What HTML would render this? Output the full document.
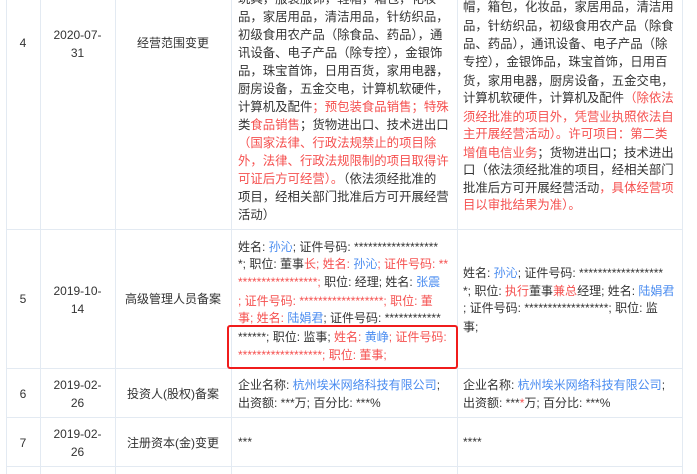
<!DOCTYPE html>
<html><head><meta charset="utf-8"><style>
body{margin:0;width:697px;height:474px;overflow:hidden;background:#fff;font-family:"Liberation Sans","Noto Sans CJK SC",sans-serif;font-size:12px;color:#333}
.l{position:absolute;white-space:nowrap;line-height:18px;height:18px}
.r{color:#f5504f}.b{color:#4a8cf0}
.v{position:absolute;top:0;height:474px;width:1px;background:#e3eaf2}
.h{position:absolute;left:6px;width:676px;height:1px;background:#e3eaf2}
.c{position:absolute;text-align:center;line-height:18px}
</style></head><body>
<div class="v" style="left:6px"></div><div class="v" style="left:40px"></div><div class="v" style="left:115px"></div><div class="v" style="left:231px"></div><div class="v" style="left:457px"></div><div class="v" style="left:682px"></div>
<div class="h" style="top:229px"></div><div class="h" style="top:368px"></div><div class="h" style="top:417px"></div><div class="h" style="top:466px"></div>

<div class="c" style="left:6px;width:34px;top:34px">4</div>
<div class="c" style="left:40px;width:75px;top:26px">2020-07-<br>31</div>
<div class="c" style="left:115px;width:116px;top:34px">经营范围变更</div>

<div style="position:absolute;left:238px;top:0;width:215px;font-size:12.4px">
<div class="l" style="top:-10px">玩具，服装服饰，鞋帽，箱包，化妆</div>
<div class="l" style="top:8px">品，家居用品，清洁用品，针纺织品，</div>
<div class="l" style="top:26px">初级食用农产品（除食品、药品），通</div>
<div class="l" style="top:44px">讯设备、电子产品（除专控），金银饰</div>
<div class="l" style="top:62px">品，珠宝首饰，日用百货，家用电器，</div>
<div class="l" style="top:80px">厨房设备，五金交电，计算机软硬件，</div>
<div class="l" style="top:98px">计算机及配件<span class="r">；预包装食品销售；特殊</span></div>
<div class="l" style="top:116px">类<span class="r">食品销售</span>；货物进出口、技术进出口</div>
<div class="l r" style="top:134px">（国家法律、行政法规禁止的项目除</div>
<div class="l r" style="top:152px">外，法律、行政法规限制的项目取得许</div>
<div class="l" style="top:170px"><span class="r">可证后方可经营）。</span>（依法须经批准的</div>
<div class="l" style="top:188px">项目，经相关部门批准后方可开展经营</div>
<div class="l" style="top:206px">活动）</div>
</div>

<div style="position:absolute;left:463px;top:0;font-size:12.4px">
<div class="l" style="top:-2px">帽，箱包，化妆品，家居用品，清洁用</div>
<div class="l" style="top:17px">品，针纺织品，初级食用农产品（除食</div>
<div class="l" style="top:35px">品、药品），通讯设备、电子产品（除</div>
<div class="l" style="top:53px">专控），金银饰品，珠宝首饰，日用百</div>
<div class="l" style="top:72px">货，家用电器，厨房设备，五金交电，</div>
<div class="l" style="top:89px">计算机软硬件，计算机及配件<span class="r">（除依法</span></div>
<div class="l r" style="top:108px">须经批准的项目外，凭营业执照依法自</div>
<div class="l r" style="top:125px">主开展经营活动）。许可项目：第二类</div>
<div class="l" style="top:144px"><span class="r">增值电信业务</span>；货物进出口；技术进出</div>
<div class="l" style="top:161px">口（依法须经批准的项目，经相关部门</div>
<div class="l" style="top:179px">批准后方可开展经营活动<span class="r">，具体经营项</span></div>
<div class="l r" style="top:196px">目以审批结果为准）。</div>
</div>

<div class="c" style="left:6px;width:34px;top:290px">5</div>
<div class="c" style="left:40px;width:75px;top:282px">2019-10-<br>14</div>
<div class="c" style="left:115px;width:116px;top:290px">高级管理人员备案</div>
<div style="position:absolute;left:238px;top:0">
<div class="l" style="top:238px">姓名: <span class="b">孙沁</span>; 证件号码: ******************</div>
<div class="l" style="top:255px">*; 职位: 董事<span class="r">长; 姓名: </span><span class="b">孙沁</span><span class="r">; 证件号码: **</span></div>
<div class="l r" style="top:273px">*****************; <span style="color:#333">职位: 经理; 姓名: </span><span class="b">张震</span></div>
<div class="l r" style="top:292px">; 证件号码: ******************; 职位: 董</div>
<div class="l" style="top:309px"><span class="r">事; 姓名: </span><span class="b">陆娟君</span>; 证件号码: ************</div>
<div class="l" style="top:328px">******; 职位: 监事; <span class="r">姓名: </span><span class="b">黄峥</span><span class="r">; 证件号码:</span></div>
<div class="l r" style="top:346px">******************; 职位: 董事;</div>
</div>
<div style="position:absolute;left:227px;top:325px;width:227px;height:40px;border:2px solid #f01c1c;border-radius:3px"></div>

<div style="position:absolute;left:463px;top:0">
<div class="l" style="top:264px">姓名: <span class="b">孙沁</span>; 证件号码: ******************</div>
<div class="l" style="top:282px">*; 职位: <span class="r">执行</span>董事<span class="r">兼总</span>经理; 姓名: <span class="b">陆娟君</span></div>
<div class="l" style="top:299px">; 证件号码: ******************; 职位: 监</div>
<div class="l" style="top:318px">事;</div>
</div>

<div class="c" style="left:6px;width:34px;top:385px">6</div>
<div class="c" style="left:40px;width:75px;top:376px">2019-02-<br>26</div>
<div class="c" style="left:115px;width:116px;top:385px">投资人(股权)备案</div>
<div class="l" style="left:238px;top:376px">企业名称: <span class="b">杭州埃米网络科技有限公司</span>;</div>
<div class="l" style="left:238px;top:394px">出资额: ***万; 百分比: ***%</div>
<div class="l" style="left:463px;top:376px">企业名称: <span class="b">杭州埃米网络科技有限公司</span>;</div>
<div class="l" style="left:463px;top:394px">出资额: ***<span class="r">*</span>万; 百分比: ***%</div>

<div class="c" style="left:6px;width:34px;top:434px">7</div>
<div class="c" style="left:40px;width:75px;top:425px">2019-02-<br>26</div>
<div class="c" style="left:115px;width:116px;top:434px">注册资本(金)变更</div>
<div class="l" style="left:238px;top:433px">***</div>
<div class="l" style="left:463px;top:433px">****</div>
</body></html>
